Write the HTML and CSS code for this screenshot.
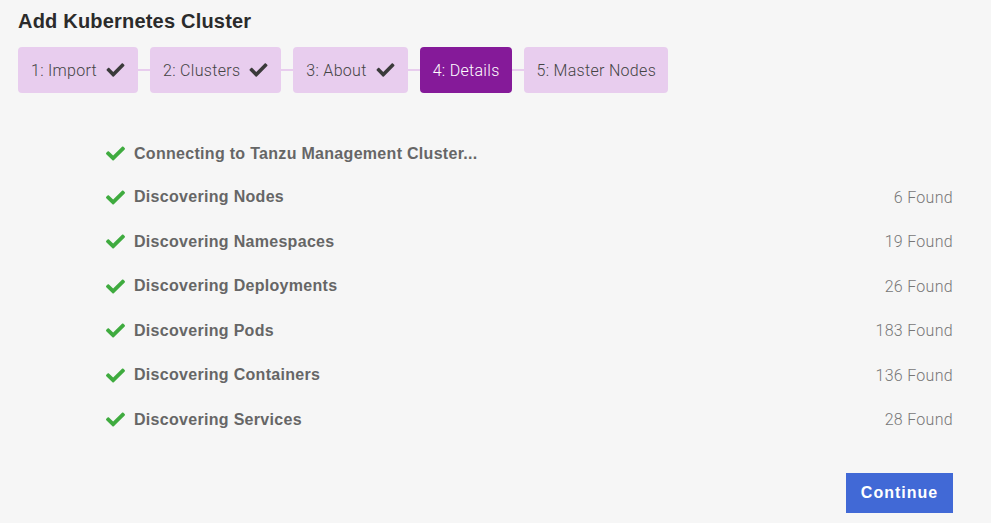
FILE: index.html
```html
<!DOCTYPE html>
<html lang="en">

<head>
    <meta charset="UTF-8">
    <title>Add Kubernetes Cluster</title>
    <link rel="stylesheet" href="styles.css">
</head>

<body>
    <div class="wizard">
        <h1 class="title">Add Kubernetes Cluster</h1>

        <div class="steps">
            <div class="step done">1: Import <svg class="tick" viewBox="0 0 512 512"><path d="M173.898 439.404l-166.4-166.4c-9.997-9.997-9.997-26.206 0-36.204l36.203-36.204c9.997-9.998 26.207-9.998 36.204 0L192 312.69 432.095 72.596c9.997-9.997 26.207-9.997 36.204 0l36.203 36.204c9.997 9.997 9.997 26.206 0 36.204l-294.4 294.401c-9.998 9.997-26.207 9.997-36.204-.001z"/></svg></div>
            <div class="link"></div>
            <div class="step done">2: Clusters <svg class="tick" viewBox="0 0 512 512"><path d="M173.898 439.404l-166.4-166.4c-9.997-9.997-9.997-26.206 0-36.204l36.203-36.204c9.997-9.998 26.207-9.998 36.204 0L192 312.69 432.095 72.596c9.997-9.997 26.207-9.997 36.204 0l36.203 36.204c9.997 9.997 9.997 26.206 0 36.204l-294.4 294.401c-9.998 9.997-26.207 9.997-36.204-.001z"/></svg></div>
            <div class="link"></div>
            <div class="step done">3: About <svg class="tick" viewBox="0 0 512 512"><path d="M173.898 439.404l-166.4-166.4c-9.997-9.997-9.997-26.206 0-36.204l36.203-36.204c9.997-9.998 26.207-9.998 36.204 0L192 312.69 432.095 72.596c9.997-9.997 26.207-9.997 36.204 0l36.203 36.204c9.997 9.997 9.997 26.206 0 36.204l-294.4 294.401c-9.998 9.997-26.207 9.997-36.204-.001z"/></svg></div>
            <div class="link"></div>
            <div class="step active">4: Details</div>
            <div class="link"></div>
            <div class="step">5: Master Nodes</div>
        </div>

        <!-- discovery progress -->
        <ul class="tasks">
            <li class="task"><span class="name"><svg class="ok" viewBox="0 0 512 512"><path d="M173.898 439.404l-166.4-166.4c-9.997-9.997-9.997-26.206 0-36.204l36.203-36.204c9.997-9.998 26.207-9.998 36.204 0L192 312.69 432.095 72.596c9.997-9.997 26.207-9.997 36.204 0l36.203 36.204c9.997 9.997 9.997 26.206 0 36.204l-294.4 294.401c-9.998 9.997-26.207 9.997-36.204-.001z"/></svg>Connecting to Tanzu Management Cluster...</span></li>
            <li class="task"><span class="name"><svg class="ok" viewBox="0 0 512 512"><path d="M173.898 439.404l-166.4-166.4c-9.997-9.997-9.997-26.206 0-36.204l36.203-36.204c9.997-9.998 26.207-9.998 36.204 0L192 312.69 432.095 72.596c9.997-9.997 26.207-9.997 36.204 0l36.203 36.204c9.997 9.997 9.997 26.206 0 36.204l-294.4 294.401c-9.998 9.997-26.207 9.997-36.204-.001z"/></svg>Discovering Nodes</span><span class="count">6 Found</span></li>
            <li class="task"><span class="name"><svg class="ok" viewBox="0 0 512 512"><path d="M173.898 439.404l-166.4-166.4c-9.997-9.997-9.997-26.206 0-36.204l36.203-36.204c9.997-9.998 26.207-9.998 36.204 0L192 312.69 432.095 72.596c9.997-9.997 26.207-9.997 36.204 0l36.203 36.204c9.997 9.997 9.997 26.206 0 36.204l-294.4 294.401c-9.998 9.997-26.207 9.997-36.204-.001z"/></svg>Discovering Namespaces</span><span class="count">19 Found</span></li>
            <li class="task"><span class="name"><svg class="ok" viewBox="0 0 512 512"><path d="M173.898 439.404l-166.4-166.4c-9.997-9.997-9.997-26.206 0-36.204l36.203-36.204c9.997-9.998 26.207-9.998 36.204 0L192 312.69 432.095 72.596c9.997-9.997 26.207-9.997 36.204 0l36.203 36.204c9.997 9.997 9.997 26.206 0 36.204l-294.4 294.401c-9.998 9.997-26.207 9.997-36.204-.001z"/></svg>Discovering Deployments</span><span class="count">26 Found</span></li>
            <li class="task"><span class="name"><svg class="ok" viewBox="0 0 512 512"><path d="M173.898 439.404l-166.4-166.4c-9.997-9.997-9.997-26.206 0-36.204l36.203-36.204c9.997-9.998 26.207-9.998 36.204 0L192 312.69 432.095 72.596c9.997-9.997 26.207-9.997 36.204 0l36.203 36.204c9.997 9.997 9.997 26.206 0 36.204l-294.4 294.401c-9.998 9.997-26.207 9.997-36.204-.001z"/></svg>Discovering Pods</span><span class="count">183 Found</span></li>
            <li class="task"><span class="name"><svg class="ok" viewBox="0 0 512 512"><path d="M173.898 439.404l-166.4-166.4c-9.997-9.997-9.997-26.206 0-36.204l36.203-36.204c9.997-9.998 26.207-9.998 36.204 0L192 312.69 432.095 72.596c9.997-9.997 26.207-9.997 36.204 0l36.203 36.204c9.997 9.997 9.997 26.206 0 36.204l-294.4 294.401c-9.998 9.997-26.207 9.997-36.204-.001z"/></svg>Discovering Containers</span><span class="count">136 Found</span></li>
            <li class="task"><span class="name"><svg class="ok" viewBox="0 0 512 512"><path d="M173.898 439.404l-166.4-166.4c-9.997-9.997-9.997-26.206 0-36.204l36.203-36.204c9.997-9.998 26.207-9.998 36.204 0L192 312.69 432.095 72.596c9.997-9.997 26.207-9.997 36.204 0l36.203 36.204c9.997 9.997 9.997 26.206 0 36.204l-294.4 294.401c-9.998 9.997-26.207 9.997-36.204-.001z"/></svg>Discovering Services</span><span class="count">28 Found</span></li>
        </ul>

        <div class="actions">
            <button class="continue">Continue</button>
        </div>
    </div>
</body>

</html>
```

FILE: styles.css
```css
body {
    margin: 0;
    background-color: #f6f6f6;
    font-family: "Liberation Sans", Arial, sans-serif;
}

.wizard {
    padding: 8px 38px 0 18px;
}

.title {
    margin: 0 0 13px 0;
    font-size: 20px;
    font-weight: bold;
    color: #2b2b2b;
    line-height: 26px;
    letter-spacing: 0.2px;
}

.steps {
    display: flex;
    align-items: center;
}

.step {
    display: flex;
    align-items: center;
    gap: 8px;
    height: 46px;
    padding: 0 12px 0 13px;
    box-sizing: border-box;
    background-color: #e8cdee;
    border-radius: 4px;
    font-family: Roboto, "Liberation Sans", sans-serif;
    font-weight: 300;
    font-size: 16px;
    letter-spacing: 0.3px;
    color: #444;
}

.step.active {
    background-color: #851a99;
    color: #fff;
}

.tick {
    width: 21px;
    height: 18px;
    fill: #3a3a3a;
}

.link {
    width: 12px;
    height: 2px;
    background-color: #e8cdee;
}

.tasks {
    list-style: none;
    margin: 39px 0 0 89px;
    padding: 0;
}

.task {
    display: flex;
    justify-content: space-between;
    align-items: center;
    height: 44.5px;
}

.task:first-child {
    height: 43px;
}

.name {
    display: flex;
    align-items: center;
    font-size: 16px;
    font-weight: bold;
    letter-spacing: 0.3px;
    color: #666;
}

.ok {
    width: 21px;
    height: 19px;
    margin-left: -2px;
    margin-right: 8px;
    fill: #3fab3f;
}

.count {
    font-family: Roboto, "Liberation Sans", sans-serif;
    font-weight: 300;
    font-size: 16px;
    letter-spacing: 0.3px;
    color: #777;
}

.actions {
    display: flex;
    justify-content: flex-end;
    margin-top: 31px;
}

.continue {
    width: 107px;
    height: 40px;
    border: none;
    background-color: #4169d6;
    color: #fff;
    font-family: "Liberation Sans", Arial, sans-serif;
    font-size: 16px;
    font-weight: bold;
    letter-spacing: 1px;
    cursor: pointer;
}
```
